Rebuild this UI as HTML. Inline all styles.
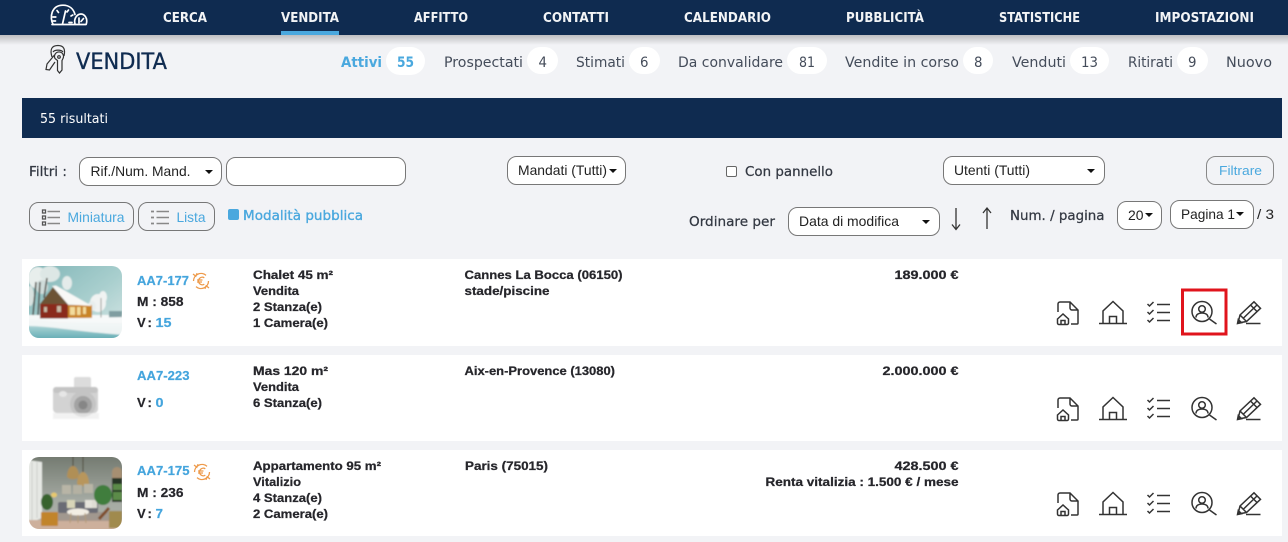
<!DOCTYPE html>
<html lang="it"><head><meta charset="utf-8"><title>Vendita</title>
<style>
html,body{margin:0;padding:0;background:#f2f3f6;width:1288px;height:542px;overflow:hidden}
svg{display:block}
text{white-space:pre}
.nav{font:700 13px "DejaVu Sans",sans-serif;fill:#f2f4f6}
.tab{font:400 14px "DejaVu Sans",sans-serif;fill:#444c5a}
.ar{font:400 14px "Liberation Sans",sans-serif;fill:#222}
.lb{font:400 13px "DejaVu Sans",sans-serif;fill:#333842;stroke:#333842;stroke-width:.25}
.l{font:700 12px "Liberation Sans",sans-serif;fill:#26262b;stroke:#26262b;stroke-width:.25}
.r{font:700 13px "Liberation Sans",sans-serif;fill:#26262b;stroke-width:.2;stroke:#26262b}
.bl{fill:#45a5dd;stroke:#45a5dd}
.ln{fill:none;stroke:#333;stroke-width:1.5}
.box{fill:#fff;stroke:#777;stroke-width:1}
</style></head><body>
<svg width="1288" height="542" viewBox="0 0 1288 542" xmlns="http://www.w3.org/2000/svg">
<defs>
<linearGradient id="sh" x1="0" y1="0" x2="0" y2="1"><stop offset="0" stop-color="#000" stop-opacity=".22"/><stop offset="1" stop-color="#000" stop-opacity="0"/></linearGradient>
<linearGradient id="sky" x1="0" y1="0" x2="1" y2="1"><stop offset="0" stop-color="#7fb4b6"/><stop offset=".55" stop-color="#a9cfce"/><stop offset="1" stop-color="#dbe9e8"/></linearGradient>
<linearGradient id="snow" x1="0" y1="0" x2="0" y2="1"><stop offset="0" stop-color="#f7f9f9"/><stop offset="1" stop-color="#e8f0f0"/></linearGradient>
<linearGradient id="ice" x1="0" y1="0" x2="0" y2="1"><stop offset="0" stop-color="#a9d2d4"/><stop offset="1" stop-color="#5faab2"/></linearGradient>
<linearGradient id="wall" x1="0" y1="0" x2="0" y2="1"><stop offset="0" stop-color="#72796f"/><stop offset=".6" stop-color="#a5aaa3"/><stop offset="1" stop-color="#b0b3ac"/></linearGradient>
<clipPath id="c1"><rect x="29" y="266" width="93" height="72" rx="10"/></clipPath>
<clipPath id="c3"><rect x="29" y="457" width="93" height="72" rx="10"/></clipPath>
<filter id="b1" x="-5%" y="-5%" width="110%" height="110%"><feGaussianBlur stdDeviation=".7"/></filter>
<g id="icons" class="ln" fill="none">
<path d="M1058 312V304a2 2 0 0 1 2-2H1070L1078 310V323a1 1 0 0 1-1 1H1071M1070 302v6a2 2 0 0 0 2 2h6"/>
<path d="M1057.500 319l5.500-5 5.500 5v4a1.500 1.500 0 0 1-1.500 1.500h-8a1.500 1.500 0 0 1-1.500-1.500ZM1061 324.500v-4h4v4"/>
<path d="M1099 323.500H1127M1103 323.500V311L1113 301.500 1123 311V323.500M1109.500 323.500v-7h7v7"/>
<path d="M1157 304.500H1170M1157 312.500H1170M1157 320.500H1170M1147.500 304l2 2 4-4M1147.500 312l2 2 4-4M1147.500 320l2 2 4-4"/>
<circle cx="1202" cy="311.500" r="10"/>
<circle cx="1202" cy="309" r="3.300"/>
<path d="M1196 317.500c0-3 2.500-4.500 6-4.500s6 1.500 6 4.500M1209.500 319L1216.500 324"/>
<path d="M1238 323L1240 315 1254 301.800 1260.500 308.300 1246.500 321.500ZM1240 315L1246.500 321.500M1243 318.500L1257 305M1250.500 305L1257 311.500M1246 323.500H1260.500"/>
<path d="M1237.500 323.500l.8-4 3.200 3.200Z" fill="#333"/>
</g>
<g id="euro" fill="none" stroke="#ee9a4a" stroke-width="1.300">
<path d="M193.500 281a7.500 7.500 0 0 1 12.500-5.600M208.500 281a7.500 7.500 0 0 1-12.500 5.600"/>
<path d="M193 274l2.800 2.200 1.200-3M209 288l-2.800-2.200-1.200 3"/>
<path d="M204.300 277.800a3.800 3.800 0 1 0 0 6.400M197 280h5.500M197 282h5"/>
</g>
</defs>

<rect width="1288" height="542" fill="#f2f3f6"/>
<rect y="35" width="1288" height="10" fill="url(#sh)"/>
<rect width="1288" height="35" fill="#0f2b50"/>
<rect x="281" y="31" width="58" height="4" fill="#4aa8de"/>

<!-- logo -->
<g fill="none" stroke="#fff" stroke-width="1.700" stroke-linecap="round">
<path d="M52 24.500H86M53 24C49.500 18 51 5.200 63 5.200 69.500 5.200 73.500 9 75 14.500"/>
<path d="M62.500 24L65.500 11M57 10.500l1.500 2M52.800 17h3M68.500 10l-1.500 2M72.800 15l-1.800 1M53 21h2.500M69 22.500h3"/>
<path d="M75 24C73.500 18 77.500 14 81 14S88 18.500 86.300 24"/>
<path d="M79 18v5M83.500 18.500l-2.500 3"/>
</g>
<g class="nav">
<text x="163" y="22" textLength="44" lengthAdjust="spacingAndGlyphs">CERCA</text>
<text x="281" y="22" textLength="58" lengthAdjust="spacingAndGlyphs">VENDITA</text>
<text x="414" y="22" textLength="54" lengthAdjust="spacingAndGlyphs">AFFITTO</text>
<text x="543" y="22" textLength="66" lengthAdjust="spacingAndGlyphs">CONTATTI</text>
<text x="684" y="22" textLength="87" lengthAdjust="spacingAndGlyphs">CALENDARIO</text>
<text x="846" y="22" textLength="78" lengthAdjust="spacingAndGlyphs">PUBBLICITÀ</text>
<text x="999" y="22" textLength="81" lengthAdjust="spacingAndGlyphs">STATISTICHE</text>
<text x="1155" y="22" textLength="99" lengthAdjust="spacingAndGlyphs">IMPOSTAZIONI</text>
</g>

<!-- keys -->
<g fill="none" stroke="#333" stroke-width="1.200">
<path d="M52 57C49.500 49 52 45.500 58 45.500S65.500 49.500 64 56"/>
<path d="M53 52c2-2.500 8-2.500 10 0"/>
<path d="M55 58.500a4.500 4.500 0 1 1 8 0L62 60.500V70l-2.500 3-2-2.500V60.500Z"/>
<circle cx="59" cy="57" r="1.300"/>
<path d="M54.500 55L47 64 46 69.500 49.500 70 55 62"/>
</g>
<text x="76" y="69" textLength="91" lengthAdjust="spacingAndGlyphs" style="font:400 22px 'DejaVu Sans',sans-serif;stroke:#0f2b50;stroke-width:.35" fill="#0f2b50">VENDITA</text>

<!-- tabs -->
<rect x="386" y="47" width="39" height="28" rx="14" fill="#fff"/>
<rect x="527" y="47" width="31" height="27" rx="13.500" fill="#fff"/>
<rect x="629" y="47" width="31" height="27" rx="13.500" fill="#fff"/>
<rect x="787" y="47" width="40" height="27" rx="13.500" fill="#fff"/>
<rect x="963" y="47" width="30" height="27" rx="13.500" fill="#fff"/>
<rect x="1070" y="47" width="39" height="27" rx="13.500" fill="#fff"/>
<rect x="1177" y="47" width="31" height="27" rx="13.500" fill="#fff"/>
<g class="tab">
<text x="341" y="67" textLength="41" lengthAdjust="spacingAndGlyphs" style="font-weight:700;fill:#4aa8de">Attivi</text>
<text x="397" y="67" textLength="17" lengthAdjust="spacingAndGlyphs" style="font-weight:700;fill:#4aa8de">55</text>
<text x="444" y="67" textLength="79" lengthAdjust="spacingAndGlyphs">Prospectati</text>
<text x="538.500" y="67" textLength="8.500" lengthAdjust="spacingAndGlyphs">4</text>
<text x="576" y="67" textLength="49" lengthAdjust="spacingAndGlyphs">Stimati</text>
<text x="640" y="67" textLength="8.500" lengthAdjust="spacingAndGlyphs">6</text>
<text x="678" y="67" textLength="105" lengthAdjust="spacingAndGlyphs">Da convalidare</text>
<text x="799" y="67" textLength="16" lengthAdjust="spacingAndGlyphs">81</text>
<text x="845" y="67" textLength="114" lengthAdjust="spacingAndGlyphs">Vendite in corso</text>
<text x="974" y="67" textLength="8.500" lengthAdjust="spacingAndGlyphs">8</text>
<text x="1012" y="67" textLength="54" lengthAdjust="spacingAndGlyphs">Venduti</text>
<text x="1081" y="67" textLength="17" lengthAdjust="spacingAndGlyphs">13</text>
<text x="1128" y="67" textLength="45" lengthAdjust="spacingAndGlyphs">Ritirati</text>
<text x="1188" y="67" textLength="8.500" lengthAdjust="spacingAndGlyphs">9</text>
<text x="1226" y="67" textLength="46" lengthAdjust="spacingAndGlyphs">Nuovo</text>
</g>

<!-- results bar -->
<rect x="22" y="98" width="1260" height="40" fill="#0f2b50"/>
<text x="40" y="123" textLength="68" lengthAdjust="spacingAndGlyphs" style="font:400 13px 'DejaVu Sans',sans-serif" fill="#fff">55 risultati</text>

<!-- filters row -->
<text class="lb" x="29" y="176" textLength="38" lengthAdjust="spacingAndGlyphs">Filtri :</text>
<rect class="box" x="79.500" y="157.500" width="142" height="28" rx="9"/>
<text class="ar" x="90.500" y="176" textLength="100" lengthAdjust="spacingAndGlyphs">Rif./Num. Mand.</text>
<path d="M205 170h8l-4 4z" fill="#111"/>
<rect class="box" x="226.500" y="157.500" width="179" height="28" rx="9"/>
<rect class="box" x="507.500" y="156.500" width="118" height="28" rx="9"/>
<text class="ar" x="518" y="175" textLength="89" lengthAdjust="spacingAndGlyphs">Mandati (Tutti)</text>
<path d="M609 169h8l-4 4z" fill="#111"/>
<rect x="726.500" y="166.500" width="10" height="10" rx="1.500" fill="#fff" stroke="#666"/>
<text class="lb" x="745" y="176" textLength="88" lengthAdjust="spacingAndGlyphs">Con pannello</text>
<rect class="box" x="943.500" y="156.500" width="161" height="28" rx="9"/>
<text class="ar" x="954" y="175" textLength="76" lengthAdjust="spacingAndGlyphs">Utenti (Tutti)</text>
<path d="M1087 169h8l-4 4z" fill="#111"/>
<rect class="box" x="1206.500" y="156.500" width="67" height="28" rx="9" style="fill:#f2f3f6;stroke:#888"/>
<text class="ar" x="1219" y="175" textLength="43" lengthAdjust="spacingAndGlyphs" style="fill:#4aa8de;font-size:13px">Filtrare</text>

<!-- second row -->
<rect class="box" x="29.500" y="202.500" width="104" height="28" rx="9" style="fill:#f2f3f6;stroke:#777"/>
<g fill="none" stroke="#555" stroke-width="1.300">
<rect x="42.500" y="210" width="3" height="3"/><rect x="42.500" y="216" width="3" height="3"/><rect x="42.500" y="222" width="3" height="3"/>
</g>
<path d="M47.500 211.500h12.500M47.500 217.500h12.500M47.500 223.500h12.500" stroke="#888" stroke-width="1.600" fill="none"/>
<text class="ar" x="67.500" y="222" textLength="57" lengthAdjust="spacingAndGlyphs" style="fill:#4aa8de">Miniatura</text>
<rect class="box" x="138.500" y="202.500" width="76" height="28" rx="9" style="fill:#f2f3f6;stroke:#777"/>
<path d="M151 211.500h3M151 217.500h3M151 223.500h3" stroke="#888" stroke-width="1.800" fill="none"/>
<path d="M156.500 211.500h12.500M156.500 217.500h12.500M156.500 223.500h12.500" stroke="#888" stroke-width="1.600" fill="none"/>
<text class="ar" x="176.500" y="222" textLength="29" lengthAdjust="spacingAndGlyphs" style="fill:#4aa8de">Lista</text>
<rect x="228" y="209" width="11" height="11" rx="2" fill="#4aa8de"/>
<text x="243" y="220" textLength="120" lengthAdjust="spacingAndGlyphs" style="font:400 13.500px 'DejaVu Sans',sans-serif;fill:#4aa8de;stroke:#4aa8de;stroke-width:.35">Modalità pubblica</text>

<text class="lb" x="689" y="226" textLength="86" lengthAdjust="spacingAndGlyphs">Ordinare per</text>
<rect class="box" x="788.500" y="207.500" width="151" height="28" rx="9"/>
<text class="ar" x="799" y="226" textLength="100" lengthAdjust="spacingAndGlyphs">Data di modifica</text>
<path d="M922 220h8l-4 4z" fill="#111"/>
<path d="M956 208V229M952 224.500L956 229.500 960 224.500M987 229V208.500M983 213L987 208 991 213" fill="none" stroke="#333" stroke-width="1.300"/>
<text class="lb" x="1010" y="220" textLength="94.500" lengthAdjust="spacingAndGlyphs">Num. / pagina</text>
<rect class="box" x="1117.500" y="201.500" width="44" height="28" rx="9"/>
<text class="ar" x="1128" y="220" textLength="15.500" lengthAdjust="spacingAndGlyphs">20</text>
<path d="M1145 213h8l-4 4z" fill="#111"/>
<rect class="box" x="1170.500" y="200.500" width="83" height="28" rx="9"/>
<text class="ar" x="1181" y="219" textLength="54" lengthAdjust="spacingAndGlyphs">Pagina 1</text>
<path d="M1236 212h8l-4 4z" fill="#111"/>
<text class="ar" x="1257" y="219" textLength="17" lengthAdjust="spacingAndGlyphs">/ 3</text>

<!-- rows -->
<rect x="22" y="259" width="1260" height="87" fill="#fff"/>
<rect x="22" y="355" width="1260" height="86" fill="#fff"/>
<rect x="22" y="450" width="1260" height="86" fill="#fff"/>

<!-- winter thumb -->
<g clip-path="url(#c1)"><g filter="url(#b1)">
<rect x="27" y="264" width="97" height="76" fill="url(#sky)"/>
<rect x="27" y="315" width="97" height="25" fill="url(#snow)"/>
<path d="M27 340V326C50 326 80 332 124 335V340Z" fill="url(#ice)"/>
<ellipse cx="38" cy="278" rx="10" ry="11" fill="#e8eeec"/><ellipse cx="50" cy="274" rx="10" ry="8" fill="#dde7e5"/><ellipse cx="30" cy="296" rx="4" ry="10" fill="#d8e2e0"/>
<ellipse cx="42" cy="287" rx="6" ry="7" fill="#cfdcda"/>
<ellipse cx="67" cy="283" rx="5" ry="7" fill="#e4ebea"/>
<path d="M36 282L33 315M40 282L38 315M47 278L44 298" stroke="#4e4a44" stroke-width="1.500" fill="none"/>
<ellipse cx="98" cy="303" rx="8" ry="9" fill="#f0f3f2"/><ellipse cx="103" cy="297" rx="4" ry="6" fill="#f0f3f2"/><ellipse cx="92" cy="306" rx="4" ry="5" fill="#e8eeed"/><path d="M101 298V321" stroke="#9a9a94"/>
<path d="M109 311h13v9h-13z" fill="#7f9da0"/>
<path d="M40 304L53 287 68 304Z" fill="#6d5236"/>
<rect x="40" y="304" width="28" height="14.500" fill="#8a2a1c"/>
<rect x="68" y="305" width="24" height="13" fill="#c98428"/>
<rect x="70" y="307" width="5" height="8" fill="#f3dc9c"/><rect x="77" y="307" width="3.500" height="8" fill="#f3dc9c"/><rect x="83" y="307" width="3" height="7" fill="#f3dc9c"/>
<rect x="57" y="306" width="4" height="6" fill="#c8b9a4"/><rect x="44" y="307" width="3" height="5" fill="#c8b9a4"/>
<path d="M52 286L56 285.500 92 306 68 304.500Z" fill="#f8f8f6"/>
<path d="M27 318C50 320 70 318 124 317V323L60 322Z" fill="#f7f9f9"/>
</g></g>

<!-- camera placeholder -->
<g filter="url(#b1)">
<path d="M74 388V379a2 2 0 0 1 2-2H89a2 2 0 0 1 2 2V388Z" fill="#dcdcdc"/>
<rect x="53" y="387" width="45" height="26" rx="4" fill="#d3d3d3"/>
<rect x="53" y="387" width="45" height="6" rx="3" fill="#c4c4c4"/>
<circle cx="83" cy="404" r="13" fill="#c4c4c4"/><circle cx="83" cy="405" r="9" fill="#a3a3a3"/><circle cx="83" cy="405" r="4.500" fill="#868686"/>
<ellipse cx="63" cy="394" rx="4" ry="3" fill="#e6e6e6"/>
<rect x="53" y="413" width="46" height="6" fill="#ededed" opacity=".7"/>
</g>

<!-- interior thumb -->
<g clip-path="url(#c3)"><g filter="url(#b1)">
<rect x="27" y="455" width="97" height="76" fill="url(#wall)"/>
<path d="M27 460L42 462V518L27 524Z" fill="#e6e8e4"/>
<path d="M32 462V520M37 462V518" stroke="#cbcfcb"/>
<rect x="27" y="520" width="97" height="11" fill="#cdb09c"/>
<rect x="42" y="512" width="80" height="9" fill="#9d8f84" opacity=".7"/>
<path d="M73 455v11M83 455v17" stroke="#4e4636"/>
<path d="M67 477C67 470 70 466 73 466S79 470 79 477C76 480 70 480 67 477Z" fill="#b08f57"/>
<path d="M77 484C77 477 80 472 83 472S89 477 89 484C86 487 80 487 77 484Z" fill="#b8965c"/>
<rect x="62" y="485" width="9" height="9" fill="#b8b5a6"/><rect x="73" y="485" width="9" height="9" fill="#b4b1a2"/><rect x="84" y="484" width="9" height="9" fill="#b8b5a6"/>
<rect x="58" y="502" width="40" height="11" rx="2" fill="#6a6c75"/>
<rect x="67" y="500" width="8" height="8" fill="#d8d5b8"/><rect x="85" y="500" width="7" height="8" fill="#e6e4dc"/><rect x="92" y="500" width="5" height="8" fill="#dfddd4"/>
<ellipse cx="78" cy="512" rx="11" ry="3.500" fill="#f2eee4"/><path d="M71 513l-1 10M85 513l1 10M78 515v8" stroke="#b39a76"/>
<path d="M42 512h15a1 1 0 0 1 1 1v12a1 1 0 0 1-1 1H42a1 1 0 0 1-1-1v-12a1 1 0 0 1 1-1Z" fill="#c1842c"/>
<ellipse cx="47" cy="502" rx="6" ry="8" fill="#37632f"/>
<ellipse cx="54" cy="495" rx="3" ry="2.500" fill="#e6c86e"/>
<ellipse cx="103" cy="495" rx="9" ry="10" fill="#3f7d3e"/>
<path d="M112 478H122V502H112Z" fill="#273626"/><path d="M113 484h9v6h-9zM113 492h9v8h-9z" fill="#5c8b48"/>
<path d="M112 472a5 5 0 0 1 10 0v6h-10Z" fill="#a68f72"/>
<rect x="109" y="511" width="13" height="17" fill="#a08a4e"/>
<path d="M99 519l10-11" stroke="#7e4d2a" stroke-width="3"/>
</g></g>

<!-- id column -->
<g class="r">
<text class="bl" x="137" y="285" textLength="52" lengthAdjust="spacingAndGlyphs">AA7-177</text>
<text x="137" y="306" textLength="46.500" lengthAdjust="spacingAndGlyphs">M : 858</text>
<text x="137" y="327">V</text><text x="147.500" y="327">:</text>
<text class="bl" x="155.500" y="327" textLength="16" lengthAdjust="spacingAndGlyphs">15</text>
<text class="bl" x="137" y="380" textLength="52.500" lengthAdjust="spacingAndGlyphs">AA7-223</text>
<text x="137" y="407">V</text><text x="147.500" y="407">:</text>
<text class="bl" x="155.500" y="407" textLength="8" lengthAdjust="spacingAndGlyphs">0</text>
<text class="bl" x="137" y="475" textLength="52.500" lengthAdjust="spacingAndGlyphs">AA7-175</text>
<text x="137" y="497" textLength="46.500" lengthAdjust="spacingAndGlyphs">M : 236</text>
<text x="137" y="518">V</text><text x="147.500" y="518">:</text>
<text class="bl" x="155.500" y="518" textLength="7.500" lengthAdjust="spacingAndGlyphs">7</text>
</g>
<use href="#euro"/>
<use href="#euro" transform="translate(1 191)"/>

<g class="l">
<text x="253" y="279" textLength="80" lengthAdjust="spacingAndGlyphs">Chalet 45 m²</text>
<text x="253" y="295" textLength="46" lengthAdjust="spacingAndGlyphs">Vendita</text>
<text x="253" y="311" textLength="69" lengthAdjust="spacingAndGlyphs">2 Stanza(e)</text>
<text x="253" y="327" textLength="75" lengthAdjust="spacingAndGlyphs">1 Camera(e)</text>
<text x="464.500" y="279" textLength="158" lengthAdjust="spacingAndGlyphs">Cannes La Bocca (06150)</text>
<text x="464.500" y="295" textLength="85" lengthAdjust="spacingAndGlyphs">stade/piscine</text>
<text x="894.500" y="279" textLength="64" lengthAdjust="spacingAndGlyphs">189.000 €</text>

<text x="253" y="375" textLength="75" lengthAdjust="spacingAndGlyphs">Mas 120 m²</text>
<text x="253" y="391" textLength="46" lengthAdjust="spacingAndGlyphs">Vendita</text>
<text x="253" y="407" textLength="69" lengthAdjust="spacingAndGlyphs">6 Stanza(e)</text>
<text x="464.500" y="375" textLength="150.500" lengthAdjust="spacingAndGlyphs">Aix-en-Provence (13080)</text>
<text x="882.500" y="375" textLength="76" lengthAdjust="spacingAndGlyphs">2.000.000 €</text>

<text x="253" y="470" textLength="128" lengthAdjust="spacingAndGlyphs">Appartamento 95 m²</text>
<text x="253" y="486" textLength="48" lengthAdjust="spacingAndGlyphs">Vitalizio</text>
<text x="253" y="502" textLength="69" lengthAdjust="spacingAndGlyphs">4 Stanza(e)</text>
<text x="253" y="518" textLength="75" lengthAdjust="spacingAndGlyphs">2 Camera(e)</text>
<text x="465" y="470" textLength="83" lengthAdjust="spacingAndGlyphs">Paris (75015)</text>
<text x="894.500" y="470" textLength="64" lengthAdjust="spacingAndGlyphs">428.500 €</text>
<text x="765.500" y="486" textLength="193" lengthAdjust="spacingAndGlyphs">Renta vitalizia : 1.500 € / mese</text>
</g>

<!-- action icons -->
<use href="#icons"/>
<use href="#icons" transform="translate(0 96)"/>
<use href="#icons" transform="translate(0 191)"/>
<rect x="1182.500" y="290" width="43.500" height="44" fill="none" stroke="#e0141c" stroke-width="3"/>
</svg>
</body></html>
